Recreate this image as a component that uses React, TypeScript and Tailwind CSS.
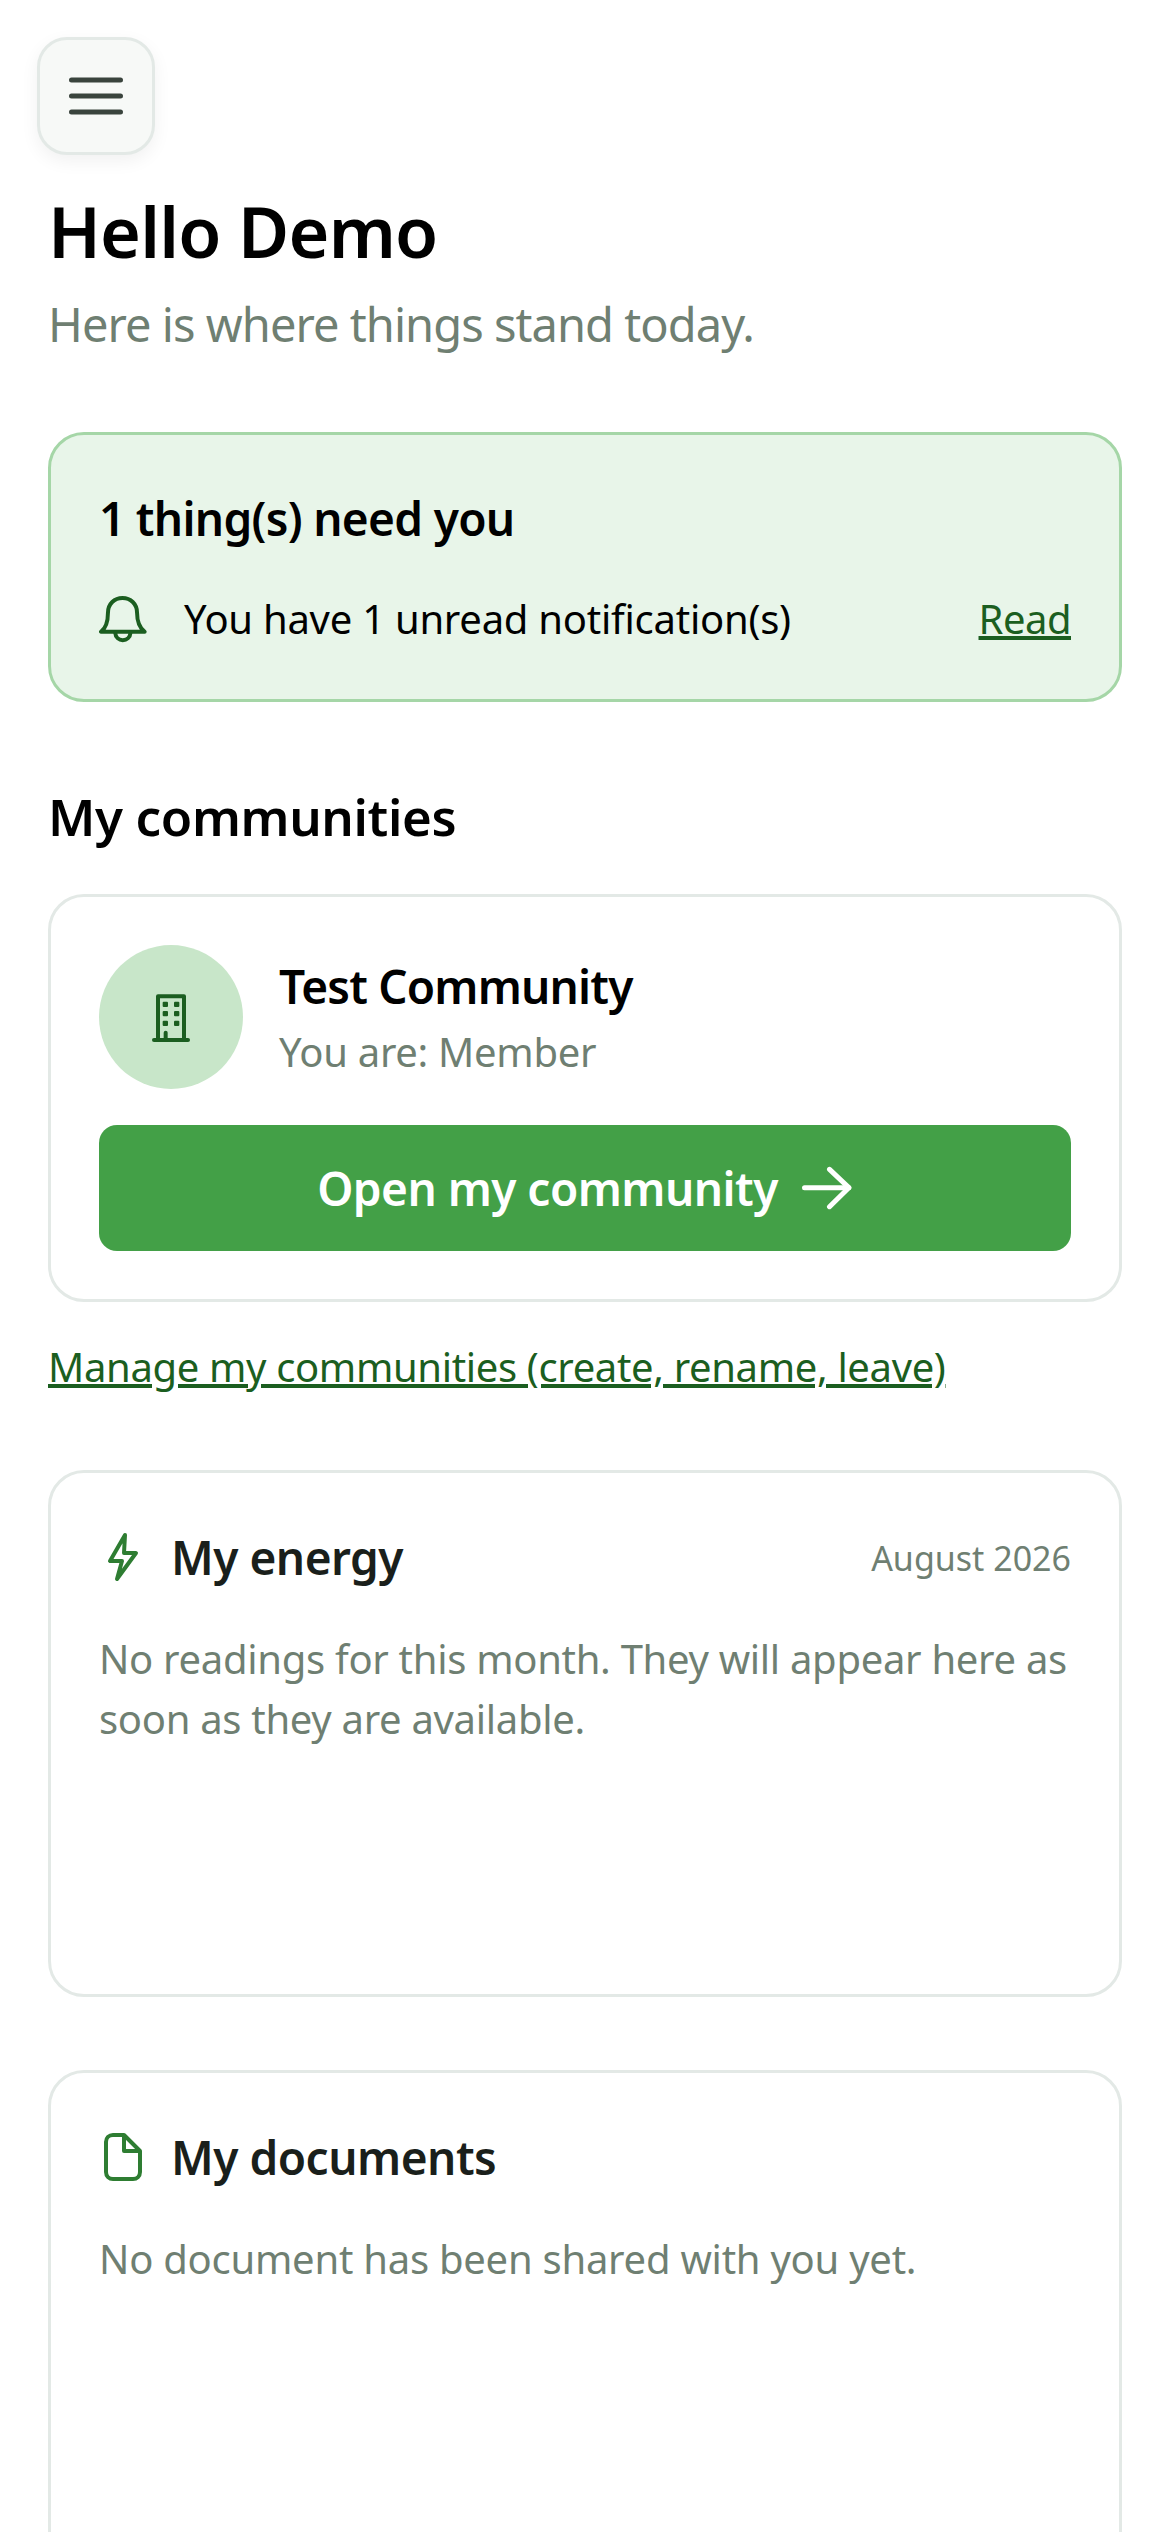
const font = "font-['Noto_Sans',sans-serif]";

function MenuIcon() {
  return (
    <svg width="54" height="48" viewBox="0 0 54 48" fill="none" stroke="#3a443d" strokeWidth="5" strokeLinecap="round">
      <path d="M2.5 8h49M2.5 24h49M2.5 40h49" />
    </svg>
  );
}

function BellIcon() {
  return (
    <svg width="49" height="49" viewBox="27 36 148 148" fill="none" stroke="#1b5e20" strokeWidth="12" strokeLinecap="round" strokeLinejoin="round" className="shrink-0">
      <path d="M33 147H165C150 135 142 120 142 90C142 62 122 45 98 45C74 45 54 62 54 90C54 120 48 135 33 147Z" />
      <path d="M76 150C78 180 120 180 122 150" />
    </svg>
  );
}

function BuildingIcon() {
  return (
    <svg width="42" height="52" viewBox="60 30 126 156" fill="none" stroke="#1b5e20" strokeWidth="12" strokeLinecap="round" strokeLinejoin="round">
      <path d="M72 177H174" />
      <path d="M84 177V46H162V177" />
      <path d="M107 177V155" />
      <g fill="#1b5e20" stroke="none">
        <rect x="98" y="62" width="16" height="16" rx="3" />
        <rect x="132" y="62" width="16" height="16" rx="3" />
        <rect x="98" y="90" width="16" height="16" rx="3" />
        <rect x="132" y="90" width="16" height="16" rx="3" />
        <rect x="98" y="119" width="16" height="16" rx="3" />
        <rect x="132" y="119" width="16" height="16" rx="3" />
      </g>
    </svg>
  );
}

function ArrowIcon() {
  return (
    <svg width="53" height="44" viewBox="30 48 158 132" fill="none" stroke="#ffffff" strokeWidth="15" strokeLinecap="round" strokeLinejoin="round">
      <path d="M43 113H176" />
      <path d="M118 58L176 113L118 170" />
    </svg>
  );
}

function ZapIcon() {
  return (
    <svg width="48" height="50" viewBox="0 0 48 50" fill="none" stroke="#2e7d32" strokeWidth="4" strokeLinejoin="round" className="shrink-0">
      <path d="M26 3L11 29H23L18 47L37 21H25Z" />
    </svg>
  );
}

function FileIcon() {
  return (
    <svg width="48" height="50" viewBox="0 0 48 50" fill="none" stroke="#2e7d32" strokeWidth="4" strokeLinejoin="round" className="shrink-0">
      <path d="M14 3H25L41 19V40C41 44 38 47 34 47H14C10 47 7 44 7 40V10C7 6 10 3 14 3Z" />
      <path d="M25 3V19H41" />
    </svg>
  );
}

export default function App() {
  return (
    <div className={`${font} w-[1170px] h-[2532px] overflow-hidden bg-white`}>
      <div className="pt-[37px] pl-[37px]">
        <button className="flex h-[118px] w-[118px] items-center justify-center rounded-[30px] border-[3px] border-[#e3e9e6] bg-[#f7f9f7] shadow-[0_6px_18px_rgba(0,0,0,0.06)]">
          <MenuIcon />
        </button>
      </div>
      <main className="px-[48px]">
        <h1 className="mt-[32px] text-[70px] leading-[88px] font-semibold tracking-[-0.8px] text-black">Hello Demo</h1>
        <p className="mt-[17px] text-[47px] leading-[64px] tracking-[-0.95px] text-[#6f7f72]">Here is where things stand today.</p>

        <section className="mt-[76px] h-[270px] rounded-[36px] border-[3px] border-[#a5d6a7] bg-[#e8f5e9] px-[48px] pt-[53px]">
          <h2 className="text-[46px] leading-[60px] font-semibold tracking-[-0.7px] text-black">1 thing(s) need you</h2>
          <div className="mt-[44px] flex items-center">
            <BellIcon />
            <span className="ml-[36px] flex-1 text-[40px] leading-[54px] tracking-[-0.25px] text-black">You have 1 unread notification(s)</span>
            <a className="text-[40px] leading-[54px] tracking-[-0.5px] text-[#1b5e20] underline">Read</a>
          </div>
        </section>

        <h2 className="mt-[78px] text-[51px] leading-[72px] font-semibold tracking-[-0.35px] text-black">My communities</h2>

        <section className="mt-[42px] h-[408px] rounded-[36px] border-[3px] border-[#e3e9e6] bg-white p-[48px]">
          <div className="flex items-center gap-[36px]">
            <div className="flex h-[144px] w-[144px] items-center justify-center rounded-full bg-[#c8e6c9]">
              <BuildingIcon />
            </div>
            <div>
              <div className="text-[46px] leading-[60px] font-semibold tracking-[-0.8px] text-black">Test Community</div>
              <div className="mt-[9px] text-[40px] leading-[54px] tracking-[-0.3px] text-[#6f7f72]">You are: Member</div>
            </div>
          </div>
          <button className="mt-[36px] flex h-[126px] w-full items-center justify-center gap-[22px] rounded-[18px] bg-[#43a047] text-[46px] font-semibold tracking-[-0.55px] text-white">
            Open my community
            <ArrowIcon />
          </button>
        </section>

        <a className="mt-[38px] block text-[40px] leading-[54px] tracking-[-0.35px] text-[#1b5e20] underline">Manage my communities (create, rename, leave)</a>

        <section className="mt-[76px] h-[527px] rounded-[36px] border-[3px] border-[#e3e9e6] bg-white p-[48px]">
          <div className="mt-[6px] flex items-center">
            <ZapIcon />
            <h3 className="ml-[24px] flex-1 text-[46px] leading-[60px] font-semibold tracking-[-0.5px] text-[#1a1f1b]">My energy</h3>
            <span className="mt-[3px] text-[34px] text-[#6f7f72]">August 2026</span>
          </div>
          <p className="mt-[42px] text-[40px] leading-[60px] tracking-[-0.3px] text-[#6f7f72]">No readings for this month. They will appear here as soon as they are available.</p>
        </section>

        <section className="mt-[73px] h-[528px] rounded-[36px] border-[3px] border-[#e3e9e6] bg-white p-[48px]">
          <div className="mt-[6px] flex items-center">
            <FileIcon />
            <h3 className="ml-[24px] text-[46px] leading-[60px] font-semibold tracking-[-0.5px] text-[#1a1f1b]">My documents</h3>
          </div>
          <p className="mt-[42px] text-[40px] leading-[60px] tracking-[-0.25px] text-[#6f7f72]">No document has been shared with you yet.</p>
        </section>
      </main>
    </div>
  );
}
